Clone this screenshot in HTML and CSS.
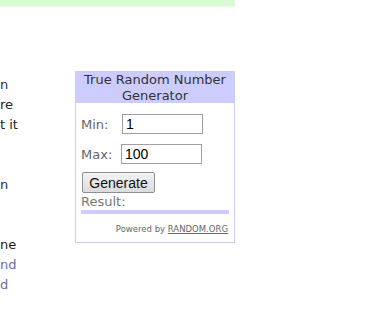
FILE: index.html
```html
<!DOCTYPE html>
<html lang="en">
<head>
  <meta charset="UTF-8">
  <title>True Random Number Generator</title>
  <link rel="stylesheet" href="styles.css">
</head>
<body>

  <div class="notice"></div>

  <div class="page">
    <div class="article">
      <div class="line dark">n</div>
      <div class="line">re</div>
      <div class="line">t it</div>
      <div class="line"></div>
      <div class="line"></div>
      <div class="line dark">n</div>
      <div class="line"></div>
      <div class="line"></div>
      <div class="line">ne</div>
      <div class="line link">nd</div>
      <div class="line link">d</div>
    </div>

    <div class="widget">
      <div class="widget-title">True Random Number<br>Generator</div>
      <div class="widget-body">
        <div class="row"><label>Min:</label><input type="text" value="1"></div>
        <div class="row"><label class="max">Max:</label><input type="text" value="100"></div>
        <button class="btn-generate">Generate</button>
        <div class="result">Result:</div>
        <div class="result-bar"></div>
        <div class="powered">Powered by <a href="#">RANDOM.ORG</a></div>
      </div>
    </div>
  </div>

</body>
</html>
```
FILE: styles.css
```css
body { margin: 0; background: #fff; font-family: "DejaVu Sans", Verdana, sans-serif; font-size: 13px; color: #222; }
.notice { width: 235px; height: 6px; background: #dafad4; box-shadow: 0 1px 1px #e8fbe4; }
.page { display: flex; align-items: flex-start; }
.article { width: 18px; padding-top: 68px; white-space: nowrap; }
.line { height: 20px; line-height: 22px; font-size: 13px; }
.line.dark { color: #1c3050; }
.line.link { color: #6b6ba8; }
.widget { margin: 65px 0 0 57px; width: 158px; border: 1px solid #ccccee; }
.widget-title { background: #ccccff; color: #333; text-align: center; font-size: 13px; line-height: 16px; height: 31px; }
.widget-body { padding: 11px 5px 0 5px; }
.row { display: flex; align-items: center; height: 20px; margin-bottom: 10px; }
.row label { color: #666; width: 41px; font-size: 13px; }
.row label.max { width: 40px; }
input { box-sizing: border-box; width: 81px; height: 20px; border: 1px solid #a0a0a0; padding: 1px 3px; font-family: "Liberation Sans", Arial, sans-serif; font-size: 14px; color: #000; margin: 0; }
.btn-generate { display: block; margin: -2px 0 0 1px; width: 73px; height: 21px; padding: 0; border: 1px solid #8e8e8e; border-radius: 2px; background: linear-gradient(#f4f4f4, #dcdcdc); font-family: "Liberation Sans", Arial, sans-serif; font-size: 14px; color: #111; }
.result { color: #777; font-size: 13px; line-height: 16px; margin-top: 1px; }
.result-bar { height: 4px; background: #ccccff; width: 148px; }
.powered { text-align: right; font-size: 8.5px; color: #666; margin-top: 10px; padding-right: 1px; line-height: 11px; height: 18px; }
.powered a { color: #666; }
```
